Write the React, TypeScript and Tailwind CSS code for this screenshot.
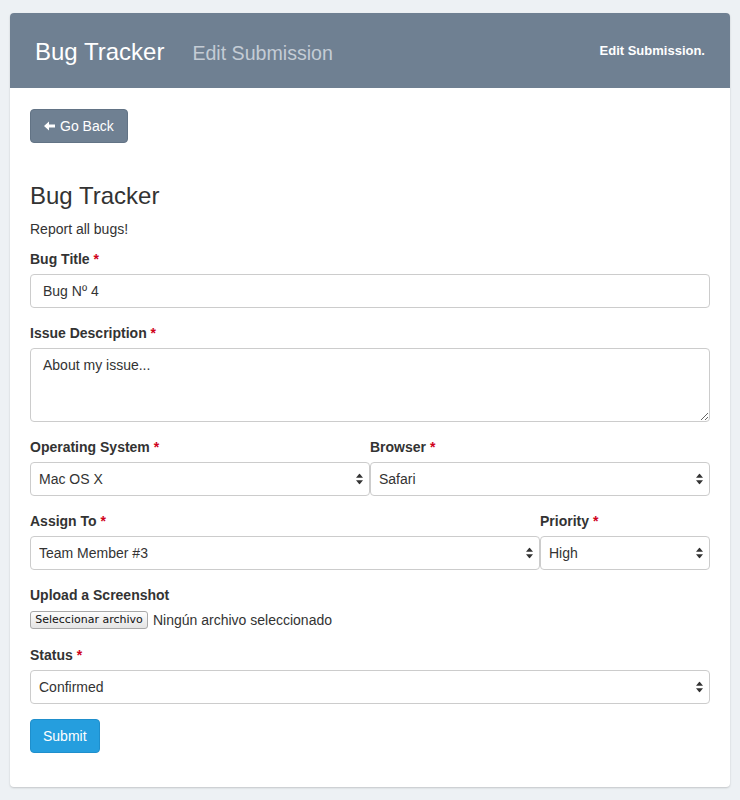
import React from "react";

const Req = () => <span className="text-[#d0021b]"> *</span>;

function Label({ children, required }: { children: React.ReactNode; required?: boolean }) {
  return (
    <label className="block mb-[5px] h-5 leading-5 font-bold text-[14px] text-[#333]">
      {children}
      {required && <Req />}
    </label>
  );
}

function Arrows() {
  return (
    <svg className="pointer-events-none absolute right-[7px] top-1/2 -translate-y-1/2" width="7" height="11" viewBox="0 0 7 11">
      <path d="M3.5 0 L7 4.3 L0 4.3 Z" fill="#333" />
      <path d="M3.5 11 L7 6.7 L0 6.7 Z" fill="#333" />
    </svg>
  );
}

function Select({ value, options }: { value: string; options: string[] }) {
  return (
    <div className="relative">
      <select
        defaultValue={value}
        className="w-full h-[34px] appearance-none bg-white border border-[#ccc] rounded-[4px] pl-2 pr-6 text-[14px] text-[#333] outline-none"
      >
        {options.map((o) => (
          <option key={o}>{o}</option>
        ))}
      </select>
      <Arrows />
    </div>
  );
}

export default function App() {
  return (
    <div className="min-h-screen bg-[#edf1f4] pt-[13px] px-[10px] pb-[13px] font-['Liberation_Sans',Arial,sans-serif]">
      <div className="bg-white rounded-[4px] overflow-hidden shadow-[0_1px_2px_rgba(0,0,0,0.18)]">
        {/* header */}
        <div className="h-[75px] bg-[#6f8092] flex items-center justify-between pl-[25px] pr-[25px]">
          <div className="flex items-baseline gap-[28px] pt-[2px]">
            <span className="text-[24px] text-white">Bug Tracker</span>
            <span className="text-[19.6px] text-[#c4ccd5]">Edit Submission</span>
          </div>
          <span className="text-[13px] font-bold text-white">Edit Submission.</span>
        </div>

        <div className="px-5 pt-[21px] pb-[34px]">
          <button className="h-[34px] px-[13px] flex items-center gap-[5px] bg-[#6f8092] border border-[#627385] rounded-[4px] text-white text-[14px]">
            <svg width="11" height="10" viewBox="0 0 11 10">
              <path d="M0 5 L5 0.5 L5 3.5 L11 3.5 L11 6.5 L5 6.5 L5 9.5 Z" fill="white" />
            </svg>
            Go Back
          </button>

          <h3 className="mt-10 mb-[10px] text-[24px] leading-[26px] text-[#333]">Bug Tracker</h3>
          <p className="mb-[10px] text-[14px] leading-5 text-[#333]">Report all bugs!</p>

          <div className="mb-[15px]">
            <Label required>Bug Title</Label>
            <input
              defaultValue="Bug Nº 4"
              className="w-full h-[34px] border border-[#ccc] rounded-[4px] px-3 text-[14px] text-[#333] outline-none"
            />
          </div>

          <div className="mb-[15px]">
            <Label required>Issue Description</Label>
            <textarea
              defaultValue="About my issue..."
              className="block w-full h-[74px] border border-[#ccc] rounded-[4px] px-3 py-[6px] text-[14px] leading-5 text-[#333] outline-none"
            />
          </div>

          <div className="grid grid-cols-2 mb-[15px]">
            <div>
              <Label required>Operating System</Label>
              <Select value="Mac OS X" options={["Mac OS X", "Windows", "Linux"]} />
            </div>
            <div>
              <Label required>Browser</Label>
              <Select value="Safari" options={["Safari", "Chrome", "Firefox"]} />
            </div>
          </div>

          <div className="grid grid-cols-4 mb-[15px]">
            <div className="col-span-3">
              <Label required>Assign To</Label>
              <Select value="Team Member #3" options={["Team Member #1", "Team Member #2", "Team Member #3"]} />
            </div>
            <div>
              <Label required>Priority</Label>
              <Select value="High" options={["Low", "Medium", "High"]} />
            </div>
          </div>

          <div className="mb-[15px]">
            <Label>Upload a Screenshot</Label>
            <div className="flex items-center gap-[5px] h-5">
              <span className="h-[18px] w-[118px] flex items-center justify-center border border-[#a9a9a9] rounded-[3px] bg-gradient-to-b from-[#fdfdfd] to-[#e4e4e4] text-[11px] text-[#111] font-['DejaVu_Sans',sans-serif]">
                Seleccionar archivo
              </span>
              <span className="text-[14px] text-[#333]">Ningún archivo seleccionado</span>
            </div>
          </div>

          <div className="mb-[15px]">
            <Label required>Status</Label>
            <Select value="Confirmed" options={["New", "Confirmed", "In Progress", "Resolved"]} />
          </div>

          <button className="h-[34px] px-3 bg-[#259ede] border border-[#1f8fcc] rounded-[4px] text-white text-[14px]">
            Submit
          </button>
        </div>
      </div>
    </div>
  );
}
